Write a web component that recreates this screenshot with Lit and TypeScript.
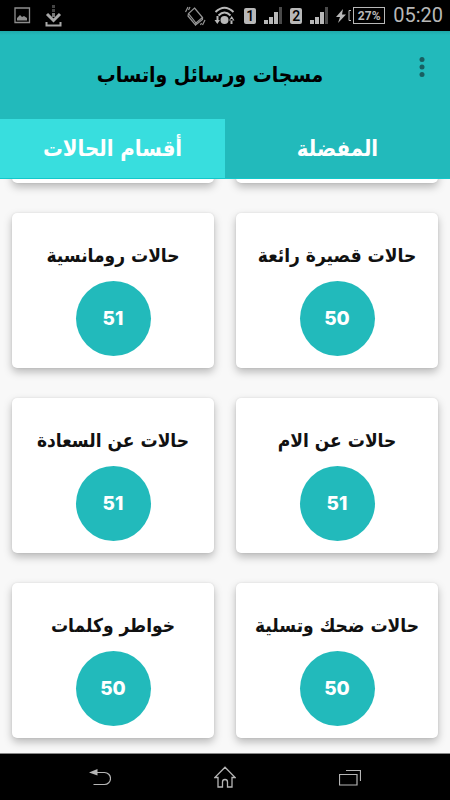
import { LitElement, html, svg, css } from "lit";
import { customElement, property } from "lit/decorators.js";

const signal = svg`
  <path d="M0 13h4v4H0z M5 10h4v7H5z M10 5h4v12h-4z" fill="#b8b8b8"/>
  <path d="M15 0h3v17h-3z" fill="#4a4a4a"/>`;

@customElement("status-bar")
class StatusBar extends LitElement {
  static styles = css`
    :host {
      display: flex;
      align-items: center;
      justify-content: space-between;
      height: 31px;
      padding: 0 7px 0 14px;
      background: #000;
      color: #b8b8b8;
      font-family: Roboto, sans-serif;
    }
    .group { display: flex; align-items: center; }
    .left { gap: 14px; }
    .right { gap: 8px; }
    .sim {
      width: 12px;
      height: 16px;
      border-radius: 2px;
      background: #b8b8b8;
      color: #000;
      font-size: 14px;
      font-weight: 500;
      line-height: 16px;
      text-align: center;
    }
    .power { display: flex; align-items: center; gap: 2px; }
    .battery {
      box-sizing: border-box;
      width: 32px;
      height: 17px;
      border: 1px solid #b8b8b8;
      font-size: 12px;
      font-weight: 700;
      line-height: 16px;
      text-align: center;
    }
    .time { font-size: 20px; line-height: 31px; }
    svg { display: block; }
  `;
  render() {
    return html`
      <div class="group left">
        <svg width="17" height="17" viewBox="0 0 17 17">
          <path d="M1 1h14.500v14.500H1z" fill="none" stroke="#8e8e8e" stroke-width="1.300"/>
          <path d="M3 13.500V11l3-3 2 2 2-1 3 2v2.500z" fill="#8e8e8e"/>
        </svg>
        <svg width="17" height="22" viewBox="0 0 17 22">
          <path d="M7 0h3v3H7z M7 4h3v3H7z" fill="#444"/>
          <path d="M7 8h3v4H7z" fill="#777"/>
          <path d="M2 9l6.500 6.500L15 9" fill="none" stroke="#a8a8a8" stroke-width="3"/>
          <path d="M1.500 17v3.500h14V17" fill="none" stroke="#a8a8a8" stroke-width="2"/>
        </svg>
      </div>
      <div class="group right">
        <svg width="21" height="20" viewBox="0 0 21 20" fill="none" stroke="#959595" stroke-width="1.200">
          <path d="M9.500 2l8 9.500-6.500 5.500L3.500 7.500z M3.500 7.500l-.5 2.500 7.500 9 .5-2 M17.500 11.500l0 2-7 5.500"/>
          <path d="M.5 6L3 1 M3.500 4l1.500-3 M17.500 19l2.500-5 M15.500 19l1-2"/>
        </svg>
        <svg width="22" height="20" viewBox="0 0 22 20">
          <path d="M1.500 6Q10.500-2.500 19.500 6 M4.500 9.500q6-6 12 0" fill="none" stroke="#b8b8b8" stroke-width="2"/>
          <circle cx="10.500" cy="14" r="4" fill="#b8b8b8"/>
          <path d="M2.500 10h2v5h-2z M.5 14h5.500l-2.700 4z M16.500 13h2v5h-2z M15 14.500h5.500L17.700 10z" fill="#b8b8b8"/>
        </svg>
        <span class="sim">1</span>
        <svg width="18" height="17" viewBox="0 0 18 17">${signal}</svg>
        <span class="sim">2</span>
        <svg width="18" height="17" viewBox="0 0 18 17">${signal}</svg>
        <span class="power">
          <svg width="10" height="14" viewBox="0 0 10 14"><path d="M7 0L0 8h4l-2 6 8-8.500H6z" fill="#b8b8b8"/></svg>
          <svg width="3" height="17" viewBox="0 0 3 17"><path d="M3 3.500H1v10h2" fill="none" stroke="#b8b8b8"/></svg>
          <span class="battery">27%</span>
        </span>
        <time class="time">05:20</time>
      </div>
    `;
  }
}

@customElement("category-card")
class CategoryCard extends LitElement {
  @property() label = "";
  @property({ type: Number }) count = 0;
  static styles = css`
    :host {
      display: flex;
      flex-direction: column;
      align-items: center;
      box-sizing: border-box;
      height: 155px;
      padding-top: 26px;
      border-radius: 5px;
      background: #fff;
      box-shadow: 0 4px 8px rgba(0, 0, 0, 0.26), 0 0 2px rgba(0, 0, 0, 0.1);
    }
    .label {
      margin: 0;
      color: #111;
      font-size: 19px;
      font-weight: 700;
      line-height: 32px;
      white-space: nowrap;
    }
    .count {
      width: 75px;
      height: 75px;
      margin-top: 10px;
      border-radius: 50%;
      background: #22babb;
      color: #fff;
      font-family: Inter, sans-serif;
      font-size: 19px;
      font-weight: 800;
      line-height: 75px;
      text-align: center;
    }
  `;
  render() {
    return this.label
      ? html`<h2 class="label">${this.label}</h2><div class="count">${this.count}</div>`
      : html``;
  }
}

const categories = [
  { label: "", count: 0 },
  { label: "", count: 0 },
  { label: "حالات قصيرة رائعة", count: 50 },
  { label: "حالات رومانسية", count: 51 },
  { label: "حالات عن الام", count: 51 },
  { label: "حالات عن السعادة", count: 51 },
  { label: "حالات ضحك وتسلية", count: 50 },
  { label: "خواطر وكلمات", count: 50 },
];

@customElement("app-root")
class AppRoot extends LitElement {
  static styles = css`
    :host {
      display: flex;
      flex-direction: column;
      height: 100vh;
      background: #f8f8f8;
      font-family: "DejaVu Sans Condensed", "DejaVu Sans", sans-serif;
    }
    status-bar, header, .tabs, .system { flex: none; }
    button {
      margin: 0;
      padding: 0;
      border: 0;
      background: none;
      font-family: inherit;
      cursor: pointer;
    }
    svg { display: block; }
    header {
      display: flex;
      height: 88px;
      padding: 0 12px 0 14px;
      box-sizing: border-box;
      background: linear-gradient(#1fa9aa, #22babb 4px);
    }
    h1 {
      flex: 1;
      margin: 0;
      color: #000;
      font-size: 21px;
      font-weight: 700;
      line-height: 88px;
      text-align: center;
      white-space: nowrap;
    }
    .more {
      display: flex;
      align-items: center;
      justify-content: center;
      width: 32px;
      height: 72px;
    }
    .tabs {
      display: grid;
      grid-template-columns: 1fr 1fr;
      height: 60px;
      background: #22babb;
    }
    .tab {
      border-bottom: 1px solid #12c8cb;
      color: #fff;
      font-size: 22px;
      font-weight: 700;
    }
    .active { background: #38dede; }
    main {
      flex: 1;
      min-height: 0;
      display: flex;
      flex-direction: column-reverse;
      overflow-y: auto;
      scrollbar-width: none;
    }
    .list {
      display: grid;
      grid-template-columns: 1fr 1fr;
      gap: 30px 22px;
      padding: 15px 12px;
    }
    .system {
      display: flex;
      justify-content: center;
      gap: 85px;
      height: 47px;
      box-sizing: border-box;
      border-top: 1px solid #888;
      background: #000;
    }
    .key {
      display: flex;
      align-items: center;
      justify-content: center;
      width: 40px;
    }
  `;
  render() {
    return html`
      <status-bar></status-bar>
      <header>
        <h1 dir="rtl">مسجات ورسائل واتساب</h1>
        <button class="more" aria-label="المزيد">
          <svg width="6" height="20" viewBox="0 0 6 20" fill="#185f61">
            <circle cx="3" cy="2.500" r="2.500"/><circle cx="3" cy="10" r="2.500"/><circle cx="3" cy="17.500" r="2.500"/>
          </svg>
        </button>
      </header>
      <nav class="tabs" dir="rtl">
        <button class="tab">المفضلة</button>
        <button class="tab active">أقسام الحالات</button>
      </nav>
      <main>
        <div class="list" dir="rtl">
          ${categories.map((c) => html`<category-card .label=${c.label} .count=${c.count}></category-card>`)}
        </div>
      </main>
      <nav class="system">
        <button class="key" aria-label="رجوع">
          <svg width="22" height="18" viewBox="0 0 22 18">
            <path d="M8 4.500h7.500a6 6 0 0 1 0 12H4.500" fill="none" stroke="#b5b5b5" stroke-width="1.200"/>
            <path d="M0 4.500L8.500 1v6.500z" fill="#b5b5b5"/>
          </svg>
        </button>
        <button class="key" aria-label="الرئيسية">
          <svg width="22" height="22" viewBox="0 0 22 22">
            <path d="M11 1.200L.8 11.500H4V21h4.500v-5a2.500 2.500 0 0 1 5 0v5H18v-9.500h3.200z" fill="none" stroke="#b5b5b5" stroke-width="1.300"/>
          </svg>
        </button>
        <button class="key" aria-label="التطبيقات الأخيرة">
          <svg width="22" height="17" viewBox="0 0 22 17" fill="none" stroke="#b5b5b5">
            <path d="M.5 5.500h17.500v10.500H.5z M7 1.500h14.500V12" stroke-width="1.200"/>
          </svg>
        </button>
      </nav>
    `;
  }
}
